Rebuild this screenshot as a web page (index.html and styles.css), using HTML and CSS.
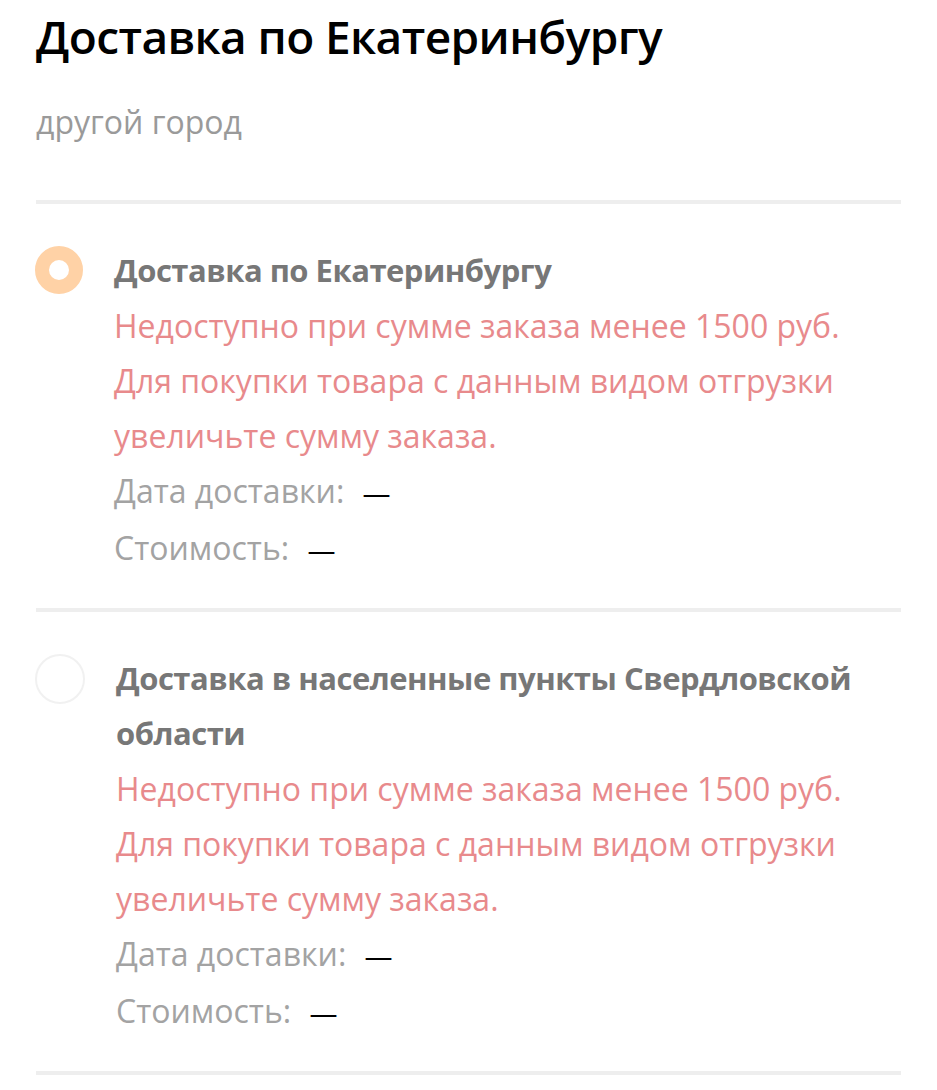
FILE: index.html
```html
<!DOCTYPE html>
<html lang="ru">
<head>
  <meta charset="UTF-8">
  <meta name="viewport" content="width=device-width, initial-scale=1.0">
  <title>Доставка</title>
  <link rel="stylesheet" href="styles.css">
</head>
<body>
  <div class="header">
    <h1>Доставка по Екатеринбургу</h1>
    <div class="city-link">другой город</div>
  </div>

  <div class="option">
    <div class="radio checked"></div>
    <div class="option-body">
      <div class="option-title">Доставка по Екатеринбургу</div>
      <div class="option-error">Недоступно при сумме заказа менее 1500 руб.<br>Для покупки товара с данным видом отгрузки<br>увеличьте сумму заказа.</div>
      <div class="option-row">Дата доставки: <span class="dash">—</span></div>
      <div class="option-row">Стоимость: <span class="dash">—</span></div>
    </div>
  </div>

  <div class="option">
    <div class="radio"></div>
    <div class="option-body">
      <div class="option-title">Доставка в населенные пункты Свердловской<br>области</div>
      <div class="option-error">Недоступно при сумме заказа менее 1500 руб.<br>Для покупки товара с данным видом отгрузки<br>увеличьте сумму заказа.</div>
      <div class="option-row">Дата доставки: <span class="dash">—</span></div>
      <div class="option-row">Стоимость: <span class="dash">—</span></div>
    </div>
  </div>
</body>
</html>
```

FILE: styles.css
```css
body {
    margin: 0;
    padding: 0 36px;
    font-family: 'Open Sans', 'Noto Sans', sans-serif;
    background: #fff;
    color: #000;
}

.header {
    border-bottom: 4px solid #eeeeee;
    padding-bottom: 58px;
}

h1 {
    margin: 0;
    padding-top: 6px;
    font-size: 46px;
    font-weight: 600;
    line-height: 60px;
    letter-spacing: -0.6px;
}

.city-link {
    margin-top: 36px;
    font-size: 32px;
    line-height: 40px;
    color: #9a9a9a;
}

.option {
    display: flex;
    gap: 31px;
    padding: 39px 0 31px;
    border-bottom: 4px solid #eeeeee;
}

/* radio marker */
.radio {
    flex: none;
    width: 46px;
    height: 46px;
    border: 2px solid #f1f1f1;
    border-radius: 50%;
    box-sizing: content-box;
    margin-left: -1px;
    margin-top: 3px;
}

.radio.checked {
    width: 20px;
    height: 20px;
    border: 14px solid #ffd2a6;
}

.option-body {
    font-size: 32px;
    line-height: 55px;
}

.option-title {
    font-size: 31px;
    font-weight: 700;
    color: #777;
    letter-spacing: -0.5px;
}

.option-error {
    color: #e88a8c;
}

.option-row {
    color: #a3a3a3;
}

.dash {
    color: #000;
    font-size: 28px;
    margin-left: 10px;
}
```
